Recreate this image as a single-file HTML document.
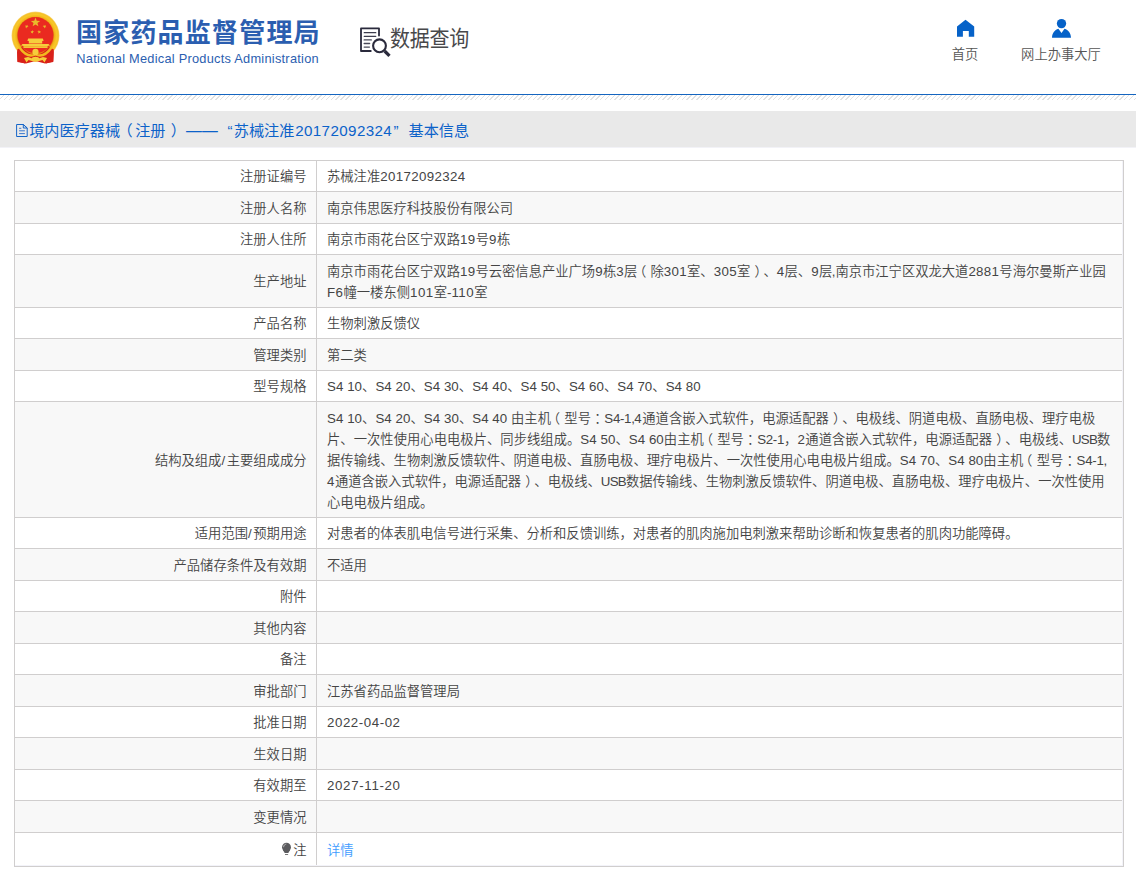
<!DOCTYPE html>
<html lang="zh-CN">
<head>
<meta charset="utf-8">
<title>国家药品监督管理局 数据查询</title>
<style>
*{box-sizing:border-box;margin:0;padding:0}
html,body{width:1136px;height:876px;overflow:hidden;background:#fff}
body{position:relative;font-family:"Liberation Sans","Noto Sans CJK SC",sans-serif;color:#444;font-size:13.31px;font-weight:350;text-spacing-trim:space-all}
.abs{position:absolute;white-space:nowrap}
#emblem{left:5px;top:5px;width:64px;height:64px}
#t-cn{left:76px;top:12.6px;font-size:26px;line-height:40px;font-weight:700;color:#2b5eb0;letter-spacing:1.2px}
#t-en{left:76.3px;top:49.5px;font-size:12.8px;line-height:18px;color:#2b5eb0;letter-spacing:.25px;font-weight:400}
#q-ico{left:354px;top:20px;width:44px;height:42px}
#q-txt{left:390px;top:23px;font-size:20px;line-height:30px;color:#48484a;letter-spacing:-.25px;font-weight:400;transform:scaleY(1.1);transform-origin:0 50%}
#home-ico{left:944px;top:10px;width:44px;height:34px}
#user-ico{left:1040px;top:10px;width:44px;height:34px}
#home-txt{left:935px;width:60px;text-align:center;top:45px;font-size:13.3px;line-height:20px;color:#555}
#user-txt{left:1011px;width:100px;text-align:center;top:45px;font-size:13.3px;line-height:20px;color:#555}
#blue{left:0;top:94px;width:1136px;height:1px;background:#1565c0}
#hatch{left:0;top:95px;width:1136px;height:5px;background:repeating-linear-gradient(135deg,#fff 0,#fff 2.4px,#e2e2e2 2.4px,#e2e2e2 3.4px)}
#bar{left:0;top:111px;width:1136px;height:36px;background:#e9e9e9;border-bottom:0;box-shadow:0 1px 0 #f2f2f7}
#bar-ico{left:14px;top:120px;width:16px;height:20px}
#bar-txt{left:0;top:119px;font-size:15.15px;line-height:24px;color:#0c62c9;font-weight:400}
#bar-txt>span{position:absolute;top:0}
#bar-txt i{font-style:normal;position:relative}
.pl{left:-2.500px}
.pr{left:5.300px}
#b1{left:29.200px}
#b2{left:186.100px;font-size:15.800px}
#b3a{left:227.500px}
#b3{left:233.800px}
#b3n{letter-spacing:.4px;margin-left:.8px}
#b3b{left:393.600px}
#b4{left:408.500px}
table{position:absolute;left:14px;top:160px;width:1110px;border-collapse:collapse;table-layout:fixed}
td{border:1px solid #d0cece;line-height:21.15px;padding:2px 9.5px 0 10px;vertical-align:middle;white-space:nowrap;color:#444}
td.k{text-align:right;width:302px}
td.v{text-align:left}
tr:nth-child(even) td{background:#f8f8f8}
a{color:#409cff;text-decoration:none}
#bulb{left:280px;top:840px;width:14px;height:18px}
.l{letter-spacing:.5px}
.d{letter-spacing:.55px}
.s{letter-spacing:.065px}
.sl{letter-spacing:1.6px}
.r4 .l{letter-spacing:.35px}
.u{letter-spacing:-.75px}
.c{letter-spacing:-1.6px}
.m{letter-spacing:-.3px}
.ln{display:inline-block}
td i{font-style:normal;position:relative}
.tl{left:-4.2px}
.tr{left:4.3px}
.tc{left:3.2px}
</style>
</head>
<body>
<svg id="emblem" class="abs" viewBox="5 5 64 64">
<defs><radialGradient id="gr" cx="50%" cy="50%" r="50%"><stop offset="0.74" stop-color="#e08c0c"/><stop offset="0.8" stop-color="#f3b51c"/><stop offset="0.88" stop-color="#f8c928"/><stop offset="0.95" stop-color="#f5c02a"/><stop offset="1" stop-color="#f9dc86"/></radialGradient></defs>
<path d="M17 49.500 L21.500 46 L35.500 52 L49.500 46 L53.800 49.500 L53.200 62 L45 63.600 L35.500 61 L26 63.600 L17.400 62 Z" fill="#d81f16"/>
<circle cx="35.5" cy="35.6" r="24" fill="url(#gr)"/>
<circle cx="35.5" cy="35.1" r="18" fill="#ea2a20"/>
<path d="M17.200 49.500 L22 47 C27 53 32 55 35.500 53.500 C39 55 44 53 49 47 L53.800 49.500 L53.300 61.500 L46 63.400 L44.500 59 L35.500 61.500 L26.500 59 L25 63.400 L17.600 61.500 Z" fill="#d9211a"/>
<path d="M19.500 47.500 C25 55.500 31 56.500 35.500 54.500 C40 56.500 46 55.500 51.500 47.500" fill="none" stroke="#f2b81f" stroke-width="2.400"/>
<g fill="#e9bb2b">
<polygon points="35.50,17.50 36.71,20.74 40.16,20.89 37.46,23.04 38.38,26.36 35.50,24.46 32.62,26.36 33.54,23.04 30.84,20.89 34.29,20.74"/>
<polygon points="27.70,24.77 27.47,26.16 28.66,26.92 27.26,27.12 26.91,28.49 26.28,27.23 24.87,27.31 25.88,26.33 25.36,25.01 26.61,25.66"/>
<polygon points="43.60,24.77 44.69,25.66 45.94,25.01 45.42,26.33 46.43,27.31 45.02,27.23 44.39,28.49 44.04,27.12 42.64,26.92 43.83,26.16"/>
<polygon points="32.55,29.93 32.80,31.32 34.18,31.62 32.94,32.29 33.08,33.70 32.05,32.73 30.76,33.29 31.37,32.02 30.43,30.96 31.83,31.15"/>
<polygon points="38.85,29.93 39.57,31.15 40.97,30.96 40.03,32.02 40.64,33.29 39.35,32.73 38.32,33.70 38.46,32.29 37.22,31.62 38.60,31.32"/>
</g>
<g fill="#f6cd3c">
<path d="M28.200 38.600 L42.800 38.600 L43.700 40.700 L42.200 40.900 L42.200 43.400 L28.800 43.400 L28.800 40.900 L27.300 40.700 Z"/>
<path d="M22.500 43.900 L48.500 43.900 L50 45.600 L47.500 45.900 L47.500 48 L23.500 48 L23.500 45.900 L21 45.600 Z"/>
<circle cx="35.5" cy="51.9" r="3.1"/>
<path d="M24 58 L28 57 L35.500 59.500 L43 57 L47 58 L44.500 62.600 L42.500 60 L35.500 62 L28.500 60 L26.500 62.600 Z"/>
<ellipse cx="35.5" cy="58.6" rx="3.600" ry="1.800"/>
</g>
<path d="M23.500 46.700 H47.500" stroke="#ef8a1c" stroke-width=".5"/>
</svg>
<div id="t-cn" class="abs">国家药品监督管理局</div>
<div id="t-en" class="abs">National Medical Products Administration</div>
<svg id="q-ico" class="abs" viewBox="354 20 44 42">
<g fill="none" stroke="#2a2a3c" stroke-linecap="round" stroke-linejoin="round">
<path d="M379 35.600 V28.400 H361 V51 H370.800" stroke-width="1.800"/>
<path d="M364.200 32.700 H375.800 M364.200 36.300 H375.800" stroke-width="1.200" stroke="#3d3d4e"/>
<path d="M364.200 39.900 H371.300 M364.200 43.500 H369.600 M364.200 47.100 H369.400" stroke-width="1.400" stroke="#4a4a5a"/>
<circle cx="379.500" cy="45.800" r="6.400" stroke-width="2.100"/>
<path d="M384.600 51 L389.500 55.800" stroke-width="3.200" stroke-linecap="butt"/>
</g>
</svg>
<div id="q-txt" class="abs">数据查询</div>
<svg id="home-ico" class="abs" viewBox="944 10 44 34"><path d="M965.500 19.800 L974.200 26.500 V36.800 H968.800 V31 H962.900 V36.800 H957 V26.500 Z" fill="#0662c8"/></svg>
<svg id="user-ico" class="abs" viewBox="1040 10 44 34"><g fill="#0662c8"><circle cx="1061.500" cy="23.600" r="4.650"/><path d="M1052 37.700 C1052.200 33.200 1054.500 30 1058.400 28.800 L1061.500 32.900 L1064.500 28.800 C1068.500 30 1070.800 33.200 1071 37.700 Z"/></g></svg>
<div id="home-txt" class="abs">首页</div>
<div id="user-txt" class="abs">网上办事大厅</div>
<div id="blue" class="abs"></div>
<div id="hatch" class="abs"></div>
<div id="bar" class="abs"></div>
<svg id="bar-ico" class="abs" viewBox="14 120 16 20"><g fill="none" stroke="#1565c8" stroke-width="1"><path d="M23.300 124.500 H16.600 V136.500 H27.200 V128 Z"/><path d="M23.300 124.500 V128 H27.200 L23.300 124.500" stroke-linejoin="round"/><path d="M19.100 128.300 H21.300 M19.100 130.800 H24.900 M19.100 133.600 H24.900" stroke="#3a78cf"/></g></svg>
<div id="bar-txt" class="abs"><span id="b1">境内医疗器械<i class="pl">（</i>注册<i class="pr">）</i></span><span id="b2">——</span><span id="b3a">“</span><span id="b3">苏械注准<span id="b3n">20172092324</span></span><span id="b3b">”</span><span id="b4">基本信息</span></div>
<table>
<tr style="height:31px"><td class="k">注册证编号</td><td class="v"><span class="ln">苏械注准<span class="l" style="letter-spacing:.35px">20172092324</span></span></td></tr>
<tr style="height:32px"><td class="k">注册人名称</td><td class="v"><span class="ln">南京伟思医疗科技股份有限公司</span></td></tr>
<tr style="height:31px"><td class="k">注册人住所</td><td class="v"><span class="ln">南京市雨花台区宁双路<span class="l">19</span>号<span class="l">9</span>栋</span></td></tr>
<tr style="height:53px"><td class="k">生产地址</td><td class="v"><span class="ln r4">南京市雨花台区宁双路<span class="l">19</span>号云密信息产业广场<span class="l">9</span>栋<span class="l">3</span>层<i class="tl">（</i>除<span class="l">301</span>室、<span class="l">305</span>室<i class="tr">）</i>、<span class="l">4</span>层、<span class="l">9</span>层<span class="c" style="letter-spacing:-.5px;position:relative;left:-.4px">,</span>南京市江宁区双龙大道<span class="l">2881</span>号海尔曼斯产业园</span><br><span class="ln"><span class="l">F6</span>幢一楼东侧<span class="l">101</span>室-<span class="l">110</span>室</span></td></tr>
<tr style="height:31px"><td class="k">产品名称</td><td class="v"><span class="ln">生物刺激反馈仪</span></td></tr>
<tr style="height:32px"><td class="k">管理类别</td><td class="v"><span class="ln">第二类</span></td></tr>
<tr style="height:31px"><td class="k">型号规格</td><td class="v"><span class="ln"><span class="s">S4 10</span>、<span class="s">S4 20</span>、<span class="s">S4 30</span>、<span class="s">S4 40</span>、<span class="s">S4 50</span>、<span class="s">S4 60</span>、<span class="s">S4 70</span>、<span class="s">S4 80</span></span></td></tr>
<tr style="height:116px"><td class="k">结构及组成<span class="sl">/</span>主要组成成分</td><td class="v"><span class="ln" style="letter-spacing:.03px"><span class="s">S4 10</span>、<span class="s">S4 20</span>、<span class="s">S4 30</span>、<span class="s">S4 40</span> 由主机<i class="tl">（</i>型号<i class="tc">：</i><span class="m">S4-1</span><span class="c" style="letter-spacing:-.6px">,</span><span class="l">4</span>通道含嵌入式软件，电源适配器<i class="tr">）</i>、电极线、阴道电极、直肠电极、理疗电极</span><br><span class="ln" style="letter-spacing:.035px">片、一次性使用心电电极片、同步线组成。<span class="s">S4 50</span>、<span class="s">S4 60</span>由主机<i class="tl">（</i>型号<i class="tc">：</i><span class="m">S2-1</span>，<span class="l">2</span>通道含嵌入式软件，电源适配器<i class="tr">）</i>、电极线、<span class="u">USB</span>数</span><br><span class="ln" style="letter-spacing:.025px">据传输线、生物刺激反馈软件、阴道电极、直肠电极、理疗电极片、一次性使用心电电极片组成。<span class="s">S4 70</span>、<span class="s">S4 80</span>由主机<i class="tl">（</i>型号<i class="tc">：</i><span class="m">S4-1</span><span class="c">,</span></span><br><span class="ln"><span class="l">4</span>通道含嵌入式软件，电源适配器<i class="tr">）</i>、电极线、<span class="u">USB</span>数据传输线、生物刺激反馈软件、阴道电极、直肠电极、理疗电极片、一次性使用</span><br><span class="ln">心电电极片组成。</span></td></tr>
<tr style="height:31px"><td class="k">适用范围<span class="sl">/</span>预期用途</td><td class="v"><span class="ln">对患者的体表肌电信号进行采集、分析和反馈训练，对患者的肌肉施加电刺激来帮助诊断和恢复患者的肌肉功能障碍。</span></td></tr>
<tr style="height:32px"><td class="k">产品储存条件及有效期</td><td class="v"><span class="ln">不适用</span></td></tr>
<tr style="height:31px"><td class="k">附件</td><td class="v"></td></tr>
<tr style="height:32px"><td class="k">其他内容</td><td class="v"></td></tr>
<tr style="height:31px"><td class="k">备注</td><td class="v"></td></tr>
<tr style="height:32px"><td class="k">审批部门</td><td class="v"><span class="ln">江苏省药品监督管理局</span></td></tr>
<tr style="height:31px"><td class="k">批准日期</td><td class="v"><span class="ln"><span class="d">2022-04-02</span></span></td></tr>
<tr style="height:32px"><td class="k">生效日期</td><td class="v"></td></tr>
<tr style="height:31px"><td class="k">有效期至</td><td class="v"><span class="ln"><span class="d" style="letter-spacing:.66px">2027-11-20</span></span></td></tr>
<tr style="height:32px"><td class="k">变更情况</td><td class="v"></td></tr>
<tr style="height:34px"><td class="k">注</td><td class="v"><span class="ln"><a>详情</a></span></td></tr>
</table>
<div class="abs" style="left:1122px;top:161px;width:1px;height:705px;background:#f3f3f9"></div>
<div class="abs" style="left:15px;top:865px;width:1108px;height:1px;background:#f3f3f9"></div>
<svg id="bulb" class="abs" viewBox="280 840 14 18"><g fill="#5b5b5e"><ellipse cx="286.500" cy="847.300" rx="4.450" ry="4.500"/><path d="M282.900 850 L284.700 853 H288.300 L290.100 850 Z"/><rect x="285" y="854" width="3.100" height=".9" fill="#6a6a6a"/></g><path d="M283.600 847.200 C283.600 845.300 284.800 844.300 286.300 844.100" fill="none" stroke="#d8d8d8" stroke-width=".7"/></svg>
</body>
</html>
